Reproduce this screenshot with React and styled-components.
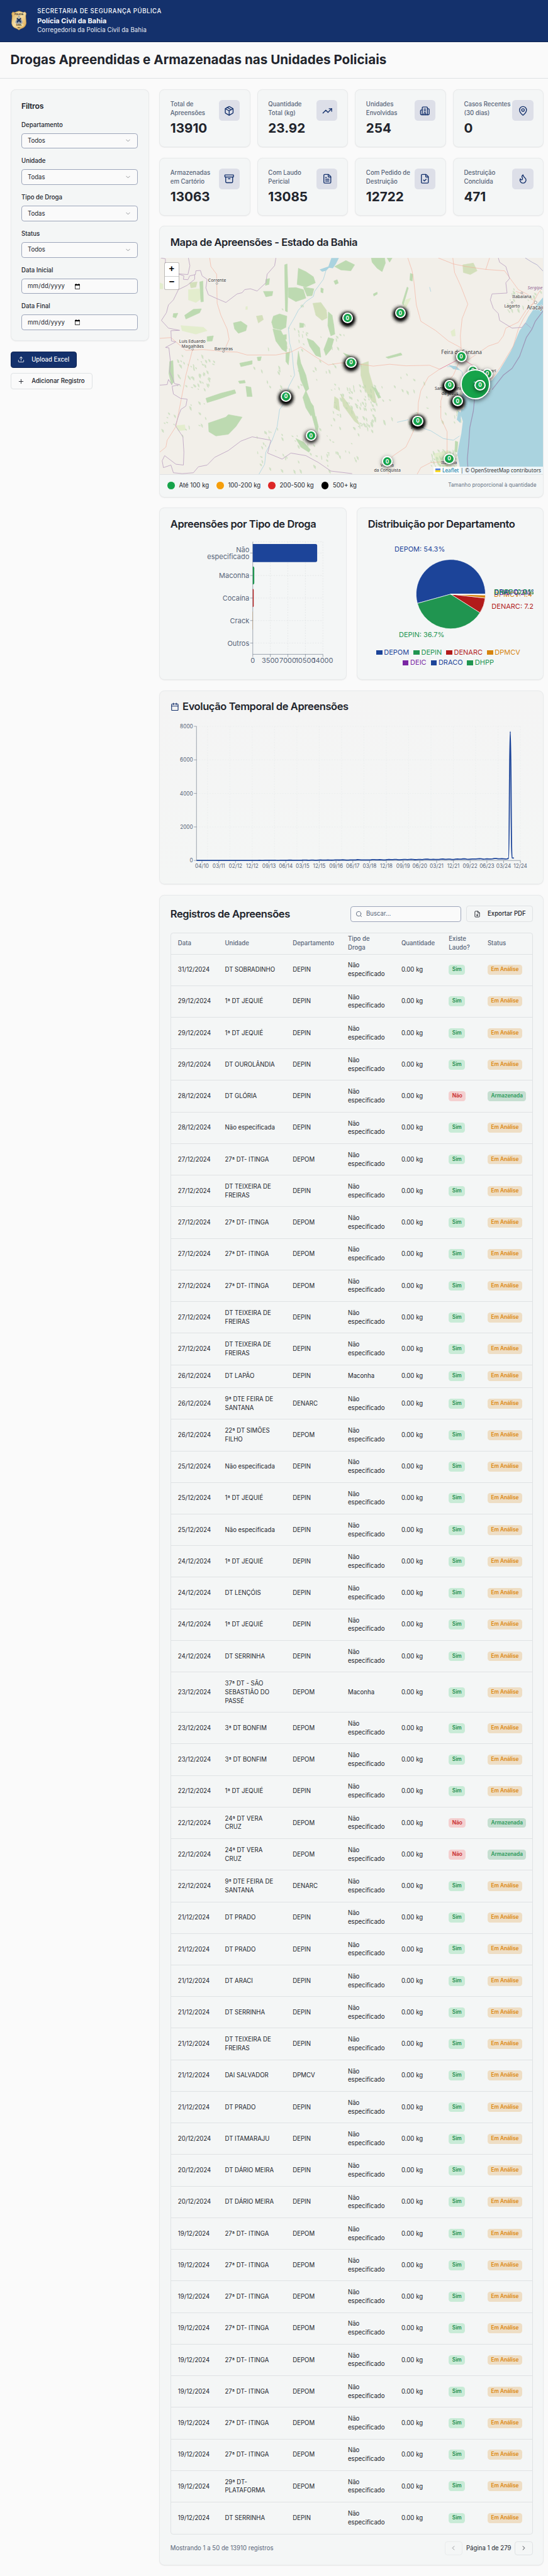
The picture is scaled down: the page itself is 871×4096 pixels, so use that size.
import React from "react";
import styled, { createGlobalStyle, css } from "styled-components";
import {
  Package, TrendingUp, Building2, MapPin, Archive, FileText, FileCheck, Flame,
  Upload, Plus, Search, FileDown, ChevronLeft, ChevronRight, ChevronDown, Calendar,
} from "lucide-react";

const c = {
  page: "#fafafa", card: "#f4f6f6", line: "#e8eaeb", rule: "#dfe2e4", input: "#9ca5ba",
  ink: "#21242c", muted: "#586579", navy: "#14316c", navyDark: "#0c2252",
  blue: "#1c4499", green: "#209550", red: "#b21b1b", orange: "#d6840f", purple: "#7a27a4",
};

const Global = createGlobalStyle`
  * { box-sizing: border-box; }
  body { margin: 0; background: ${c.page}; overflow: hidden; }
  h1, h2, h3, p { margin: 0; }
`;

const Page = styled.div`
  zoom: 0.6883;
  height: 5951px;
  background: ${c.page};
  color: ${c.ink};
  font: 400 14px/20px Inter, "Liberation Sans", sans-serif;
`;

/* ---------- header ---------- */
const Header = styled.header`
  height: 97px;
  padding: 0 24px;
  display: flex;
  align-items: center;
  gap: 24px;
  background: ${c.navy};
  border-bottom: 1px solid ${c.navyDark};
  color: #f6f8fc;
`;
const OrgLines = styled.div`
  display: flex;
  flex-direction: column;
  white-space: nowrap;
`;
const OrgTop = styled.span`
  font-weight: 500;
  letter-spacing: 0.055em;
`;
const OrgName = styled.span`
  font-size: 16px;
  line-height: 24px;
  font-weight: 700;
`;
const OrgUnit = styled.span`
  opacity: 0.95;
  letter-spacing: 0.008em;
`;
const TitleBand = styled.div`
  height: 85px;
  padding: 24px;
  border-bottom: 1px solid ${c.rule};
`;
const PageTitle = styled.h1`
  font-size: 30px;
  line-height: 36px;
  font-weight: 700;
  white-space: nowrap;
`;

function Badge() {
  return (
    <svg width="38" height="48" viewBox="0 0 38 48">
      <defs>
        <linearGradient id="gold" x1="0" y1="0" x2="1" y2="1">
          <stop offset="0" stopColor="#d9a84e" />
          <stop offset="0.45" stopColor="#f6dfa6" />
          <stop offset="1" stopColor="#d8a144" />
        </linearGradient>
      </defs>
      <path d="M5 4 Q9 7 13 4 L19 2 L25 4 Q29 7 33 4 L36 8 Q34 13 35 19 L36 30 Q35 38 29 41 Q23 43 19 46 Q15 43 9 41 Q3 38 2 30 L3 19 Q4 13 2 8 Z" fill="url(#gold)" stroke="#a98245" strokeWidth="0.8" />
      <path d="M8 8 Q19 3 30 8 L29.5 12 Q19 8 8.500 12 Z" fill="#f3d99b" />
      <path d="M8 33 Q19 29 30 33 L29.500 37 Q19 39 8.500 37 Z" fill="#f3d99b" />
      <path d="M19 11 l1 3 3 0 -2.500 2 1 2.500 -2.500 -1.500 -2.500 1.500 1 -2.500 -2.500 -2 3 0z" fill="#9fa8ad" />
      <path d="M10 28 L13 22 H25 L28 28 L25 32 H13 Z" fill="#a9adae" />
      <path d="M14 18h3v2h4v-2h3v4h-2v2h2v5h-3v-2h-4v2h-3v-5h2v-2h-2z" fill="#20365f" />
      <text x="19" y="11.500" textAnchor="middle" fontFamily="Inter, sans-serif" fontSize="5" fontWeight="800" fill="#3a3428">POLICIA</text>
      <text x="19" y="37" textAnchor="middle" fontFamily="Inter, sans-serif" fontSize="4.800" fontWeight="800" fill="#3a3428">CIVIL</text>
      <text x="19" y="42.500" textAnchor="middle" fontFamily="Inter, sans-serif" fontSize="3.500" fontWeight="800" fill="#3a3428">BA</text>
    </svg>
  );
}

/* ---------- layout ---------- */
const Main = styled.main`
  display: grid;
  grid-template-columns: 320px 888px;
  gap: 24px;
  padding: 24px;
  align-items: start;
`;
const Column = styled.div`
  display: flex;
  flex-direction: column;
  gap: 24px;
`;
const Card = styled.section`
  height: ${(p) => p.$h}px;
  padding: ${(p) => (p.$flush ? 0 : 24)}px;
  background: ${(p) => (p.$fade ? "linear-gradient(#f4f4f4, #f4f6f5)" : c.card)};
  border: 1px solid ${c.line};
  border-radius: 12px;
  box-shadow: 0 1px 2px rgba(0, 0, 0, 0.06);
`;
const CardTitle = styled.h2`
  display: flex;
  align-items: center;
  gap: 8px;
  font-size: 24px;
  line-height: 24px;
  font-weight: 600;
  letter-spacing: -0.025em;
  white-space: nowrap;
  svg { color: ${c.navy}; }
`;

/* ---------- filters ---------- */
const FilterTitle = styled.h3`
  font-size: 18px;
  line-height: 28px;
  font-weight: 600;
  letter-spacing: -0.025em;
`;
const Field = styled.div`
  margin-top: 16px;
`;
const Label = styled.div`
  height: 24px;
  line-height: 25px;
  margin-bottom: 8px;
  font-weight: 500;
`;
const Control = styled.div`
  height: 36px;
  padding: 0 13px;
  display: flex;
  align-items: center;
  justify-content: ${(p) => (p.$date ? "flex-start" : "space-between")};
  gap: 23px;
  background: ${c.page};
  border: 1px solid ${c.input};
  border-radius: 6px;
`;
const Chevron = styled(ChevronDown)`
  opacity: 0.5;
`;
const DateText = styled.span`
  letter-spacing: 0.02em;
`;
const Actions = styled.div`
  display: flex;
  flex-direction: column;
  align-items: flex-start;
  gap: 12px;
`;
const Button = styled.button`
  height: 38px;
  width: ${(p) => p.$w}px;
  padding: 0 0 0 15.5px;
  display: flex;
  align-items: center;
  gap: 16px;
  font: 500 14px/20px Inter, sans-serif;
  white-space: nowrap;
  color: ${c.ink};
  background: ${(p) => p.$bg || c.page};
  border: 1px solid ${c.rule};
  border-radius: 6px;
  ${(p) => p.$primary && css`
    color: #fafafa;
    background: ${c.navy};
    border-color: ${c.navyDark};
  `}
`;

function SelectField({ label, value }) {
  return (
    <Field>
      <Label>{label}</Label>
      <Control><span>{value}</span><Chevron size={16} /></Control>
    </Field>
  );
}
function DateField({ label }) {
  return (
    <Field>
      <Label>{label}</Label>
      <Control $date>
        <DateText>mm/dd/yyyy</DateText>
        <svg width="12" height="13" viewBox="0 0 12 13">
          <path d="M0.700 2 H11.300 V12.300 H0.700 Z" fill="none" stroke="#222" strokeWidth="1.300" />
          <path d="M0 1.300 H12 V4.200 H0 Z M2 0 H3.600 V2 H2 Z M8.400 0 H10 V2 H8.400 Z" fill="#000" />
        </svg>
      </Control>
    </Field>
  );
}

/* ---------- stats ---------- */
const Stats = styled.div`
  display: grid;
  grid-template-columns: repeat(4, 210px);
  column-gap: 16px;
  row-gap: 24px;
`;
const StatRow = styled.div`
  display: flex;
  justify-content: space-between;
`;
const StatLabel = styled.p`
  width: 112px;
  color: ${c.muted};
  font-weight: 500;
  white-space: pre;
`;
const StatValue = styled.p`
  margin-top: 8px;
  font-size: 30px;
  line-height: 36px;
  font-weight: 700;
`;
const StatIcon = styled.div`
  width: 48px;
  height: 48px;
  flex: none;
  display: grid;
  place-items: center;
  border-radius: 8px;
  background: #dddfe8;
  color: ${c.navy};
`;
const stats = [
  ["Total de\nApreensões", "13910", Package],
  ["Quantidade\nTotal (kg)", "23.92", TrendingUp],
  ["Unidades\nEnvolvidas", "254", Building2],
  ["Casos Recentes\n(30 dias)", "0", MapPin],
  ["Armazenadas\nem Cartório", "13063", Archive],
  ["Com Laudo\nPericial", "13085", FileText],
  ["Com Pedido de\nDestruição", "12722", FileCheck],
  ["Destruição\nConcluída", "471", Flame],
];

/* ---------- map ---------- */
const MapHead = styled.div`
  padding: 24px;
`;
const MapBox = styled.div`
  position: relative;
  height: 500px;
  overflow: hidden;
  background: #f2efe9;
  svg { display: block; }
`;
const ZoomControl = styled.div`
  position: absolute;
  left: 10px;
  top: 10px;
  width: 34px;
  height: 65px;
  display: grid;
  grid-template-rows: 31px 30px;
  background: #fff;
  border: 2px solid rgba(0, 0, 0, 0.22);
  border-radius: 4px;
  background-clip: padding-box;
`;
const ZoomKey = styled.span`
  display: grid;
  place-items: center;
  font: 700 22px/28px "Liberation Mono", monospace;
  color: #000;
  & + & { border-top: 1px solid #ccc; }
`;
const Attribution = styled.div`
  position: absolute;
  right: 0;
  bottom: 0;
  height: 17px;
  padding: 0 5px;
  display: flex;
  align-items: center;
  gap: 4px;
  white-space: nowrap;
  background: rgba(255, 255, 255, 0.8);
  font: 12px/17px "Noto Sans", sans-serif;
  color: #333;
`;
const AttrLink = styled.span`
  color: #0078a8;
`;
const halo = (n) => Array(n).fill("0 3px 9px 1px rgba(0,0,0,0.5)").join(",");
const Pin = styled.div`
  position: absolute;
  left: ${(p) => p.$x - p.$d / 2}px;
  top: ${(p) => p.$y - p.$d / 2}px;
  width: ${(p) => p.$d}px;
  height: ${(p) => p.$d}px;
  display: grid;
  place-items: center;
  border: 3px solid #fff;
  border-radius: 50%;
  background: #16a34a;
  box-shadow: ${(p) => halo(p.$n)};
  color: #fff;
  font-size: 12px;
  line-height: 12px;
  font-weight: 700;
`;
const Legend = styled.div`
  height: 52px;
  padding: 0 16px;
  display: flex;
  align-items: center;
  justify-content: space-between;
  border-top: 1px solid ${c.rule};
`;
const LegendItems = styled.div`
  display: flex;
  gap: 16px;
`;
const LegendItem = styled.span`
  display: flex;
  align-items: center;
  gap: 8px;
`;
const Dot = styled.i`
  width: 20px;
  height: 20px;
  border-radius: 50%;
  border: 2px solid #fff;
  background: ${(p) => p.$c};
`;
const Hint = styled.span`
  font-size: 12px;
  color: #6a7688;
`;

const SX = 1 / 1.7326, SY = 1 / 2.529;
const mx = (x) => x * SX - 9;
const my = (y) => y * SY - 65;

const forests = [
  "515,205 525,200 528,340 526,480 518,475 516,330",
  "570,225 600,245 630,275 638,310 600,335 565,320",
  "530,340 560,338 590,350 600,400 560,420 530,395",
  "590,335 632,345 625,385 605,388",
  "715,215 760,180 795,205 780,240 740,235",
  "862,165 915,165 918,195 905,245 885,225 865,190",
  "925,165 945,165 935,190",
  "470,505 495,492 524,505 520,570 500,585 470,575 463,540",
  "468,580 500,590 524,660 522,715 505,700 480,650",
  "520,720 535,715 530,790 520,770",
  "605,635 630,650 655,690 660,745 640,735 615,680",
  "690,630 712,640 700,700 680,735 672,700",
  "690,480 705,500 712,560 716,610 700,620 688,560",
  "570,710 580,780 600,850 612,930 600,945 580,880 565,780",
  "600,940 615,990 630,1060 620,1088 600,1040 588,980",
  "605,980 630,1030 645,1150 640,1170 625,1090",
  "210,1130 280,1095 290,1080 345,1095 320,1150 290,1195 240,1205 212,1180",
  "200,985 260,955 315,935 320,955 250,990 205,1010",
  "335,780 385,765 385,785 340,800",
  "310,545 340,535 365,560 360,590 330,605 315,580",
  "440,290 455,285 452,320 438,325", "430,360 468,360 465,385 440,392",
  "115,500 150,465 182,462 175,485 120,522", "70,490 88,488 80,515 68,510",
  "175,305 188,300 190,420 180,422", "55,770 68,765 72,890 62,905 52,840",
  "560,1220 590,1240 618,1285 612,1300 580,1270", "1018,255 1028,260 1026,300 1016,295",
  "985,430 1005,335 1010,340 990,440", "330,885 355,880 358,895 335,898",
  "360,915 380,920 385,975 365,975", "205,625 230,620 225,650 205,652",
  "575,545 592,548 590,570 575,572", "750,720 775,735 780,745 765,745",
  "712,300 725,292 730,312 718,320", "660,340 670,345 668,370 660,365",
  "868,920 880,925 900,980 890,985", "920,745 980,720 985,732 930,752",
  "510,615 522,612 522,640 512,640", "640,1090 650,1150 646,1180 636,1130",
  "870,375 885,365 886,376 872,388", "405,745 422,742 418,765 408,765",
  "1198,1235 1208,1240 1205,1300 1196,1295",
];
const scrub = [
  "628,430 660,425 682,470 685,515 665,530 640,500", "402,505 425,500 430,525 410,545",
  "820,785 850,770 852,830 870,920 882,1010 865,1005 835,930 820,850",
  "1228,205 1270,195 1285,240 1258,262 1230,250", "135,310 165,305 160,335 140,340",
  "740,960 790,1060 815,1140 795,1120 750,1030", "715,975 730,990 735,1060 712,1040",
];
const pale = [
  "130,350 175,345 185,400 160,425 130,410", "15,310 28,318 28,345 15,345",
  "80,1145 115,1140 118,1170 90,1175", "1180,595 1195,580 1198,620 1185,622",
  "1000,410 1020,400 1000,455 990,450", "360,450 366,448 366,466 359,466",
  "100,560 190,570 205,590 160,610 105,590", "1110,1310 1170,1290 1190,1330 1180,1390 1130,1380",
];
const roads = [
  "15,635 60,630 120,705 190,700 270,712 325,715 365,732 480,732 540,715 580,685 630,735 690,790 740,778 800,782 870,797 935,786 1000,795 1095,792 1135,815",
  "215,165 220,215 243,260 245,430 260,500 285,580 293,640 272,712",
  "147,698 120,850 100,1000 80,1150 45,1230 40,1270 15,1300",
  "1008,165 1025,240 1032,300 1042,440 1060,535 1120,590 1170,650 1221,690",
  "1130,165 1190,200 1240,215 1320,232 1395,240 1420,290 1450,350 1490,380 1519,425",
  "1335,165 1320,232", "1188,165 1195,250 1220,330 1248,435 1225,520 1218,620 1221,690",
  "1221,690 1221,742 1205,800 1190,850 1160,900 1140,1000 1140,1100 1165,1180 1165,1310 1172,1360",
  "1135,815 1090,860 1060,940 1050,1010 1047,1120 1020,1210 1000,1270 950,1320 925,1355",
  "1551,330 1530,370 1505,440 1470,520 1450,580 1430,680 1405,740 1380,800 1345,870",
  "1250,760 1290,720 1330,680 1370,660 1390,620 1400,575 1450,540 1490,450 1519,425",
  "1172,1355 1100,1360 1060,1390 1045,1429", "1475,380 1440,360",
  "1172,1360 1150,1429", "925,1355 930,1429",
];
const borders = [
  "130,165 136,210 128,262 90,258 112,270 110,290 128,292 135,270 158,262 160,240 178,238 185,270 205,290 200,340 210,380 240,400 280,425 325,375 345,368 355,350 378,345 405,358 440,310 445,260 475,210 480,165",
  "155,262 155,290 125,325 90,350 70,410 50,440 42,485 22,530 50,575 95,588 60,590 62,650 80,655 38,688 52,690 58,770 55,830 75,900 95,905 65,915 70,960 98,985 125,990 120,1030 100,1050 90,1090 78,1145 108,1210 112,1300 110,1375 80,1370 35,1320 25,1350 30,1390 60,1375 70,1420 105,1425",
  "15,908 45,905 50,875 65,908", "20,165 38,170 38,195",
  "105,1425 150,1420 170,1385 205,1375 235,1330 290,1290 340,1235 385,1210 460,1230 447,1305 505,1340 540,1305 600,1320 650,1360 700,1410 785,1425",
  "1370,165 1375,190 1400,215 1415,285 1400,310 1405,370 1345,375 1338,410 1350,460 1370,490 1375,530 1425,575 1465,570 1478,545",
];
const seaBorder = [
  "1551,470 1518,535 1505,580 1482,630 1455,740 1425,810 1390,850 1345,935",
  "1275,985 1270,1060 1256,1155 1252,1240 1246,1340 1250,1429",
];
const river = [
  "705,200 680,240 670,290 635,360 630,390 600,420 570,470 552,520 530,575 535,660 545,720 550,800 555,850 530,920 520,1000 495,1050 485,1150 465,1230 440,1300 435,1370 412,1429",
  "1050,1150 1100,1175 1150,1220 1190,1230 1215,1205", "965,1125 1010,1110", "1095,335 1100,362", "1165,800 1200,800 1225,830 1230,870",
];
/* Small vegetation flecks scattered around the plateau. */
const flecks = (() => {
  const out = [];
  let s = 7;
  const r = () => ((s = (s * 16807) % 2147483647) / 2147483647);
  const zones = [[700, 900, 180, 260, 90], [560, 600, 200, 200, 18], [80, 720, 150, 220, 50], [20, 1000, 180, 200, 18], [400, 1150, 420, 260, 60], [1100, 1280, 100, 130, 60], [420, 380, 200, 320, 16], [860, 840, 240, 340, 24], [1400, 340, 140, 160, 30], [1130, 850, 90, 300, 20], [360, 760, 340, 180, 20]];
  zones.forEach(([x, y, w, h, n]) => {
    for (let i = 0; i < n; i++) {
      const a = x + r() * w, b = y + r() * h, l = 2 + r() * 6, k = 5 + r() * 20;
      out.push(`${a},${b} ${a + l},${b + k * 0.3} ${a + l * 1.1},${b + k} ${a + l * 0.4},${b + k * 0.7}`);
    }
  });
  return out;
})();
const places = [
  [245, 294, "Corrente"], [146, 650, "Luís Eduardo"], [147, 680, "Magalhães"], [271, 694, "Barreiras"],
  [1464, 391, "Itabaiana"], [1425, 445, "Lagarto"], [1521, 456, "Aracaju", 12], [1223, 716, "Feira de Santana", 12],
  [1323, 825, "Camaçari"], [1173, 928, "Santo Antônio"], [1176, 957, "de Jesus"], [1290, 938, "Salvador", 14],
  [925, 1376, "Vitória"], [926, 1406, "da Conquista"], [1173, 1360, "Itabuna"], [1047, 1148, "Jequié"],
];
const towns = [[244, 314], [147, 698], [270, 712], [1464, 369], [1425, 425], [1519, 425, 3]];
const pins = [
  [766, 517, 9], [977, 488, 8], [1221, 742, 2], [1267, 825, 1], [1325, 843, 1], [780, 777, 7], [1206, 1002, 8],
  [1175, 909, 10], [520, 975, 8], [1047, 1118, 9], [620, 1204, 3], [925, 1355, 1], [1173, 1338, 1],
];
const Lines = ({ items, ...rest }) => (
  <g fill="none" strokeLinejoin="round" {...rest}>
    {items.map((p, i) => <polyline key={i} points={p} vectorEffect="non-scaling-stroke" />)}
  </g>
);
const Areas = ({ items, fill }) => (
  <g fill={fill} stroke={fill} strokeWidth="2" strokeLinejoin="round">{items.map((p, i) => <polygon key={i} points={p} />)}</g>
);

function BahiaMap() {
  return (
    <MapBox>
      <svg width="886" height="500" viewBox="0 0 886 500">
        <g transform={`translate(-9 -65) scale(${SX} ${SY})`}>
          <Areas items={pale} fill="#e3edcd" />
          <Areas items={scrub} fill="#d3dfbb" />
          <Areas items={forests} fill="#bddab1" />
          <g opacity="0.65"><Areas items={flecks} fill="#bddab1" /></g>
          <g fill="#aad3df">
            <path d="M1551 392 L1520 445 L1490 510 L1478 545 L1455 590 L1435 660 L1420 710 L1400 760 L1375 820 L1345 880 L1300 900 L1240 930 L1222 970 L1236 1010 L1232 1045 L1222 1050 L1218 1075 L1228 1120 L1222 1190 L1212 1260 L1206 1310 L1213 1360 L1220 1429 L1551 1429 Z" />
            <path d="M702 165 L732 165 L720 200 L708 225 L692 222 L680 240 L665 245 L655 232 L690 215 Z" />
            <path d="M1170 790 L1205 800 L1215 820 L1190 815 Z M1210 1060 L1222 1070 L1218 1130 L1204 1110 Z" />
          </g>
          <Lines items={river} stroke="#aad3df" strokeWidth="1.200" />
          <Lines items={roads} stroke="#f3ac98" strokeWidth="0.900" />
          <Lines items={["1135,815 1221,750 1270,795"]} stroke="#e0718f" strokeWidth="1.100" />
          <Lines items={borders} stroke="#c2abc6" strokeWidth="1.400" />
          <Lines items={["1478,165 1505,190 1525,205 1551,245", "1478,545 1503,577"]} stroke="#a9a5c9" strokeWidth="1.200" />
          <Lines items={seaBorder} stroke="#9c97b8" strokeWidth="1.800" />
        </g>
        <g fill="#fff" stroke="#555" strokeWidth="0.800">
          {towns.map(([x, y, r], i) => <circle key={i} cx={mx(x)} cy={my(y)} r={r || 2} />)}
        </g>
        <g fontFamily="Noto Sans, sans-serif" textAnchor="middle" fill="#333" stroke="#f7f5f1" strokeWidth="2" paintOrder="stroke">
          {places.map(([x, y, t, s]) => <text key={t} x={mx(x)} y={my(y) + 3.500} fontSize={s || 10}>{t}</text>)}
          <text x={mx(1517)} y={my(340) + 3.500} fontSize="10.500" fontStyle="italic" fill="#8d618b">Sergipe</text>
        </g>
      </svg>
      {pins.map(([x, y, n], i) => <Pin key={i} $x={mx(x)} $y={my(y)} $d={25} $n={n}>0</Pin>)}
      <Pin $x={mx(1277)} $y={my(903)} $d={69} $n={1}>7</Pin>
      <Pin $x={mx(1296)} $y={my(908)} $d={25} $n={1}>0</Pin>
      <ZoomControl><ZoomKey>+</ZoomKey><ZoomKey>−</ZoomKey></ZoomControl>
      <Attribution>
        <svg width="12" height="8" viewBox="0 0 12 8"><path fill="#4c7be1" d="M0 0h12v4H0z" /><path fill="#ffd500" d="M0 4h12v4H0z" /></svg>
        <AttrLink>Leaflet</AttrLink><span>|</span><span>© OpenStreetMap contributors</span>
      </Attribution>
    </MapBox>
  );
}

/* ---------- charts ---------- */
const ChartPair = styled.div`
  display: grid;
  grid-template-columns: 432px 432px;
  gap: 24px;
`;
const ChartArea = styled.div`
  margin-top: 24px;
  height: ${(p) => p.$h}px;
  svg { display: block; overflow: ${(p) => (p.$clip ? "hidden" : "visible")}; }
`;
const drugs = [
  [["Não", "especificado"], 12850, c.blue], [["Maconha"], 300, c.green], [["Cocaína"], 180, c.red],
  [["Crack"], 30, c.orange], [["Outros"], 0, c.purple],
];

function DrugBars() {
  const x0 = 190, top = 5, w = 162, h = 260;
  return (
    <svg width="382" height="300" viewBox="0 0 382 300" fontFamily="Inter, sans-serif" fontSize="16" fill={c.muted}>
      <g stroke="#e1e4e5" strokeDasharray="3 3">
        {[1, 2, 3, 4].map((i) => <line key={i} x1={x0 + i * w / 4} x2={x0 + i * w / 4} y1={top} y2={top + h} />)}
        <line x1={x0} x2={x0 + w} y1={top} y2={top} />
        {drugs.map((d, i) => <line key={i} x1={x0} x2={x0 + w} y1={top + 26 + i * 52} y2={top + 26 + i * 52} />)}
      </g>
      <g stroke={c.muted} strokeOpacity="0.8">
        <line x1={x0} x2={x0} y1={top} y2={top + h} />
        <line x1={x0} x2={x0 + w} y1={top + h} y2={top + h} />
        {[0, 1, 2, 3, 4].map((i) => <line key={i} x1={x0 + i * w / 4} x2={x0 + i * w / 4} y1={top + h} y2={top + h + 6} />)}
        {drugs.map((d, i) => <line key={i} x1={x0 - 6} x2={x0} y1={top + 26 + i * 52} y2={top + 26 + i * 52} />)}
      </g>
      {drugs.map(([lines, v, color], i) => {
        const bw = (v / 14000) * w, y = top + 5.200 + i * 52, r = Math.min(4, bw);
        return (
          <g key={i}>
            {v > 0 && <path fill={color} d={`M${x0} ${y} h${bw - r} q${r} 0 ${r} ${r} v${41.6 - 2 * r} q0 ${r} ${-r} ${r} h${-(bw - r)} z`} />}
            {lines.map((t, k) => (
              <text key={t} x={x0 - 8} y={top + 32 + i * 52 + (k - (lines.length - 1) / 2) * 16} textAnchor="end">{t}</text>
            ))}
          </g>
        );
      })}
      {[0, 3500, 7000, 10500, 14000].map((t, i) => (
        <text key={t} x={x0 + i * w / 4} y={top + h + 19.500} textAnchor="middle">{t}</text>
      ))}
    </svg>
  );
}

const depts = [
  ["DEPOM", 54.3, c.blue], ["DEPIN", 36.7, c.green], ["DENARC", 7.2, c.red], ["DPMCV", 1.4, c.orange],
  ["DEIC", 0.2, c.purple], ["DRACO", 0.1, c.blue], ["DHPP", 0.04, c.green],
];
const PieLegend = styled.div`
  display: flex;
  flex-direction: column;
  margin-top: -52px;
  font-size: 16px;
  line-height: 24px;
`;
const PieRow = styled.div`
  display: flex;
  justify-content: center;
`;
const PieKey = styled.span`
  display: flex;
  align-items: center;
  gap: 4px;
  margin-right: 10px;
  color: ${(p) => p.$c};
  &::before {
    content: "";
    width: 14px;
    height: 11px;
    margin-top: 2px;
    background: ${(p) => p.$c};
  }
`;

function DeptPie() {
  const cx = 191, cy = 126, r = 80;
  let acc = 0;
  const pt = (a, rad) => [cx + rad * Math.cos(a), cy - rad * Math.sin(a)];
  const slices = depts.map(([name, v, color]) => {
    const a0 = (acc / 100) * 2 * Math.PI;
    acc += v;
    return { name, v, color, a0, a1: (acc / 100) * 2 * Math.PI };
  });
  return (
    <svg width="382" height="300" viewBox="0 0 382 300" fontFamily="Inter, sans-serif" fontSize="16">
      {slices.map(({ name, color, a0, a1 }) => {
        const [xa, ya] = pt(a0, r), [xb, yb] = pt(a1, r);
        return <path key={name} fill={color} stroke="#fff" d={`M${cx} ${cy} L${xa} ${ya} A${r} ${r} 0 ${a1 - a0 > Math.PI ? 1 : 0} 0 ${xb} ${yb} Z`} />;
      })}
      {slices.map(({ name, v, color, a0, a1 }) => {
        const [x, y] = pt((a0 + a1) / 2, 100);
        return <text key={name} x={x} y={y} fill={color} textAnchor={x > cx ? "start" : "end"}>{`${name}: ${v.toFixed(1)}%`}</text>;
      })}
    </svg>
  );
}

const months = ["04/10", "03/11", "02/12", "12/12", "09/13", "06/14", "03/15", "12/15", "09/16", "06/17", "03/18", "12/18", "09/19", "06/20", "03/21", "12/21", "09/22", "06/23", "03/24", "12/24"];

function Timeline() {
  const x0 = 60, x1 = 808, top = 10, base = 320;
  const pts = [];
  for (let i = 0; i <= 168; i++) {
    const t = i / 168;
    const v = t < 0.2 ? 3 : 3 + Math.pow(t, 1.8) * 105 + t * 22 * Math.sin(i * 1.1) * Math.cos(i * 0.43);
    pts.push(`${(x0 + t * 718).toFixed(1)},${(base - (v / 8000) * 310).toFixed(1)}`);
  }
  return (
    <svg width="838" height="350" viewBox="0 0 838 350" fontFamily="Inter, sans-serif" fontSize="12" fill={c.muted}>
      <g stroke="#e9eded" strokeDasharray="3 3">
        {[0, 1, 2, 3].map((i) => <line key={i} x1={x0} x2={x1} y1={top + i * 77.5} y2={top + i * 77.5} />)}
        {Array.from({ length: 15 }, (_, i) => <line key={i} x1={85.500 + i * 51.6} x2={85.500 + i * 51.6} y1={top} y2={base} />)}
      </g>
      <g stroke={c.muted} strokeOpacity="0.8">
        <line x1={x0} x2={x0} y1={top} y2={base} />
        <line x1={x0} x2={x1} y1={base} y2={base} />
        {months.map((m, i) => <line key={m} x1={72.700 + i * 38.7} x2={72.700 + i * 38.7} y1={base} y2={base + 6} />)}
        {[0, 1, 2, 3, 4].map((i) => <line key={i} x1={x0 - 6} x2={x0} y1={top + i * 77.5} y2={top + i * 77.5} />)}
      </g>
      {[8000, 6000, 4000, 2000, 0].map((t, i) => <text key={t} x={x0 - 8} y={top + 4.300 + i * 77.5} textAnchor="end">{t}</text>)}
      {months.map((m, i) => <text key={m} x={72.700 + i * 38.7} y={base + 17} textAnchor="middle">{m}</text>)}
      <path
        d={`M${pts.join(" L")} L780.500 314.500 C782.800 314 782.600 22 784.600 22 C786.600 22 786.400 314 788.700 314 L793 314.500`}
        fill="none" stroke={c.blue} strokeWidth="2.600" strokeLinejoin="round"
      />
    </svg>
  );
}

/* ---------- table ---------- */
const Toolbar = styled.div`
  height: 38px;
  display: flex;
  align-items: center;
  justify-content: space-between;
`;
const Tools = styled.div`
  display: flex;
  align-items: center;
  gap: 12px;
`;
const SearchBox = styled.div`
  width: 256px;
  height: 36px;
  padding: 0 11px;
  display: flex;
  align-items: center;
  gap: 8px;
  color: ${c.muted};
  background: ${c.page};
  border: 1px solid ${c.input};
  border-radius: 6px;
`;
const Table = styled.div`
  margin-top: 24px;
  border: 1px solid ${c.rule};
  border-radius: 6px;
  height: 3700px;
`;
const Row = styled.div`
  height: ${(p) => p.$h}px;
  display: grid;
  grid-template-columns: 108.5px 156.5px 127.5px 123.5px 109.5px 89.5px 1fr;
  align-items: center;
  border-bottom: 1px solid ${c.rule};
  ${(p) => p.$head && css`
    color: ${c.muted};
    font-weight: 500;
  `}
  &:last-child { border-bottom: 0; }
`;
const Cell = styled.div`
  padding-left: 16px;
  white-space: pre;
`;
const tones = {
  Sim: ["#c9ebd7", "#1f8d4e"], "Não": ["#f4d0d0", "#c62424"],
  "Em Análise": ["#eedec5", "#dc8810"], Armazenada: ["#c6dfd1", "#2b9a5b"],
};
const Tag = styled.span`
  display: block;
  width: max-content;
  height: 23px;
  padding: 0 8px;
  border-radius: 6px;
  font-size: 12px;
  line-height: 23px;
  font-weight: 600;
  background: ${(p) => tones[p.$t][0]};
  color: ${(p) => tones[p.$t][1]};
`;
const Footer = styled.div`
  margin-top: 16px;
  height: 32px;
  display: flex;
  align-items: center;
  justify-content: space-between;
`;
const Count = styled.span`
  color: ${c.muted};
`;
const Pager = styled.div`
  display: flex;
  align-items: center;
  gap: 8px;
`;
const PageButton = styled.button`
  width: 42px;
  height: 32px;
  padding: 0;
  display: grid;
  place-items: center;
  color: ${c.ink};
  background: ${c.card};
  border: 1px solid ${c.rule};
  border-radius: 6px;
  opacity: ${(p) => (p.disabled ? 0.5 : 1)};
`;

const records = `31|DT SOBRADINHO|DEPIN
29|1ª DT JEQUIÉ|DEPIN
29|1ª DT JEQUIÉ|DEPIN
29|DT OUROLÂNDIA|DEPIN
28|DT GLÓRIA|DEPIN||N
28|Não especificada|DEPIN
27|27ª DT- ITINGA|DEPOM
27|DT TEIXEIRA DE/FREIRAS|DEPIN
27|27ª DT- ITINGA|DEPOM
27|27ª DT- ITINGA|DEPOM
27|27ª DT- ITINGA|DEPOM
27|DT TEIXEIRA DE/FREIRAS|DEPIN
27|DT TEIXEIRA DE/FREIRAS|DEPIN
26|DT LAPÃO|DEPIN|Maconha
26|9ª DTE FEIRA DE/SANTANA|DENARC
26|22ª DT SIMÕES/FILHO|DEPOM
25|Não especificada|DEPIN
25|1ª DT JEQUIÉ|DEPIN
25|Não especificada|DEPIN
24|1ª DT JEQUIÉ|DEPIN
24|DT LENÇÓIS|DEPIN
24|1ª DT JEQUIÉ|DEPIN
24|DT SERRINHA|DEPIN
23|37ª DT - SÃO/SEBASTIÃO DO/PASSÉ|DEPOM|Maconha
23|3ª DT BONFIM|DEPOM
23|3ª DT BONFIM|DEPOM
22|1ª DT JEQUIÉ|DEPIN
22|24ª DT VERA/CRUZ|DEPOM||N
22|24ª DT VERA/CRUZ|DEPOM||N
22|9ª DTE FEIRA DE/SANTANA|DENARC
21|DT PRADO|DEPIN
21|DT PRADO|DEPIN
21|DT ARACI|DEPIN
21|DT SERRINHA|DEPIN
21|DT TEIXEIRA DE/FREIRAS|DEPIN
21|DAI SALVADOR|DPMCV
21|DT PRADO|DEPIN
20|DT ITAMARAJU|DEPIN
20|DT DÁRIO MEIRA|DEPIN
20|DT DÁRIO MEIRA|DEPIN
19|27ª DT- ITINGA|DEPOM
19|27ª DT- ITINGA|DEPOM
19|27ª DT- ITINGA|DEPOM
19|27ª DT- ITINGA|DEPOM
19|27ª DT- ITINGA|DEPOM
19|27ª DT- ITINGA|DEPOM
19|27ª DT- ITINGA|DEPOM
19|27ª DT- ITINGA|DEPOM
19|29ª DT-/PLATAFORMA|DEPOM
19|DT SERRINHA|DEPIN`.split("\n").map((l) => {
  const [day, unit, dept, drug, no] = l.split("|");
  const name = unit.replace(/\//g, "\n");
  const type = drug || "Não\nespecificado";
  const lines = Math.max(name.split("\n").length, type.split("\n").length);
  return { date: `${day}/12/2024`, name, dept, type, no: Boolean(no), h: 33 + 20 * lines };
});

function Records() {
  return (
    <Card $h={3860}>
      <Toolbar>
        <CardTitle>Registros de Apreensões</CardTitle>
        <Tools>
          <SearchBox><Search size={16} /><span>Buscar...</span></SearchBox>
          <Button $bg={c.card} $w={153.5}><FileDown size={16} />Exportar PDF</Button>
        </Tools>
      </Toolbar>
      <Table>
        <Row $head $h={49}>
          {["Data", "Unidade", "Departamento", "Tipo de\nDroga", "Quantidade", "Existe\nLaudo?", "Status"].map((t) => <Cell key={t}>{t}</Cell>)}
        </Row>
        {records.map((r, i) => (
          <Row key={i} $h={r.h}>
            <Cell>{r.date}</Cell>
            <Cell>{r.name}</Cell>
            <Cell>{r.dept}</Cell>
            <Cell>{r.type}</Cell>
            <Cell>0.00 kg</Cell>
            <Cell><Tag $t={r.no ? "Não" : "Sim"}>{r.no ? "Não" : "Sim"}</Tag></Cell>
            <Cell><Tag $t={r.no ? "Armazenada" : "Em Análise"}>{r.no ? "Armazenada" : "Em Análise"}</Tag></Cell>
          </Row>
        ))}
      </Table>
      <Footer>
        <Count>Mostrando 1 a 50 de 13910 registros</Count>
        <Pager>
          <PageButton disabled><ChevronLeft size={16} /></PageButton>
          <span>Página 1 de 279</span>
          <PageButton><ChevronRight size={16} /></PageButton>
        </Pager>
      </Footer>
    </Card>
  );
}

export default function App() {
  return (
    <>
      <Global />
      <Page>
        <Header>
          <Badge />
          <OrgLines>
            <OrgTop>SECRETARIA DE SEGURANÇA PÚBLICA</OrgTop>
            <OrgName>Polícia Civil da Bahia</OrgName>
            <OrgUnit>Corregedoria da Polícia Civil da Bahia</OrgUnit>
          </OrgLines>
        </Header>
        <TitleBand><PageTitle>Drogas Apreendidas e Armazenadas nas Unidades Policiais</PageTitle></TitleBand>
        <Main>
          <Column>
            <Card $h={582}>
              <FilterTitle>Filtros</FilterTitle>
              <SelectField label="Departamento" value="Todos" />
              <SelectField label="Unidade" value="Todas" />
              <SelectField label="Tipo de Droga" value="Todas" />
              <SelectField label="Status" value="Todos" />
              <DateField label="Data Inicial" />
              <DateField label="Data Final" />
            </Card>
            <Actions>
              <Button $primary $w={153}><Upload size={16} />Upload Excel</Button>
              <Button $w={189}><Plus size={16} />Adicionar Registro</Button>
            </Actions>
          </Column>
          <Column>
            <Stats>
              {stats.map(([label, value, Icon]) => (
                <Card key={label} $h={134}>
                  <StatRow>
                    <div>
                      <StatLabel>{label}</StatLabel>
                      <StatValue>{value}</StatValue>
                    </div>
                    <StatIcon><Icon size={24} /></StatIcon>
                  </StatRow>
                </Card>
              ))}
            </Stats>
            <Card $h={627} $flush>
              <MapHead><CardTitle>Mapa de Apreensões - Estado da Bahia</CardTitle></MapHead>
              <BahiaMap />
              <Legend>
                <LegendItems>
                  {[["Até 100 kg", "#16a34a"], ["100-200 kg", "#f59e0b"], ["200-500 kg", "#dc2626"], ["500+ kg", "#000"]].map(([t, col]) => (
                    <LegendItem key={t}><Dot $c={col} />{t}</LegendItem>
                  ))}
                </LegendItems>
                <Hint>Tamanho proporcional à quantidade</Hint>
              </Legend>
            </Card>
            <ChartPair>
              <Card $h={398}>
                <CardTitle>Apreensões por Tipo de Droga</CardTitle>
                <ChartArea $h={300}><DrugBars /></ChartArea>
              </Card>
              <Card $h={398}>
                <CardTitle>Distribuição por Departamento</CardTitle>
                <ChartArea $h={300} $clip>
                  <DeptPie />
                  <PieLegend>
                    <PieRow>{depts.slice(0, 4).map(([n, , col]) => <PieKey key={n} $c={col}>{n}</PieKey>)}</PieRow>
                    <PieRow>{depts.slice(4).map(([n, , col]) => <PieKey key={n} $c={col}>{n}</PieKey>)}</PieRow>
                  </PieLegend>
                </ChartArea>
              </Card>
            </ChartPair>
            <Card $h={448} $fade>
              <CardTitle><Calendar size={20} />Evolução Temporal de Apreensões</CardTitle>
              <ChartArea $h={350}><Timeline /></ChartArea>
            </Card>
            <Records />
          </Column>
        </Main>
      </Page>
    </>
  );
}
